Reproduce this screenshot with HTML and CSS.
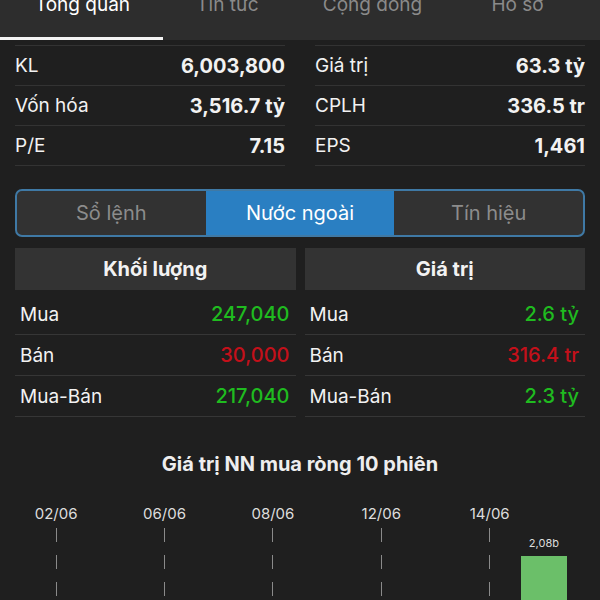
FILE: index.html
```
<!DOCTYPE html>
<html lang="vi">
<head>
  <meta charset="UTF-8" />
  <title>Tổng quan</title>
  <link rel="stylesheet" href="styles.css">
</head>
<body>

  <!-- Tabs -->
  <div class="tabbar">
    <div class="tabs">
      <div class="tab active">Tổng quan</div>
      <div class="tab">Tin tức</div>
      <div class="tab">Cộng đồng</div>
      <div class="tab">Hồ sơ</div>
    </div>
    <div class="underline"></div>
  </div>

  <!-- Stats -->
  <div class="stats">
    <div class="stat-col">
      <div class="stat-row"><span>KL</span><b>6,003,800</b></div>
      <div class="stat-row"><span>Vốn hóa</span><b>3,516.7 tỷ</b></div>
      <div class="stat-row"><span>P/E</span><b>7.15</b></div>
    </div>
    <div class="stat-col">
      <div class="stat-row"><span>Giá trị</span><b>63.3 tỷ</b></div>
      <div class="stat-row"><span>CPLH</span><b>336.5 tr</b></div>
      <div class="stat-row"><span>EPS</span><b>1,461</b></div>
    </div>
  </div>

  <!-- Segment -->
  <div class="segment">
    <div class="seg">Sổ lệnh</div>
    <div class="seg active">Nước ngoài</div>
    <div class="seg">Tín hiệu</div>
  </div>

  <!-- Foreign trading -->
  <div class="tables">
    <div class="table">
      <div class="table-head">Khối lượng</div>
      <div class="table-row"><span>Mua</span><span class="num up">247,040</span></div>
      <div class="table-row"><span>Bán</span><span class="num down">30,000</span></div>
      <div class="table-row"><span>Mua-Bán</span><span class="num up">217,040</span></div>
    </div>
    <div class="table">
      <div class="table-head">Giá trị</div>
      <div class="table-row"><span>Mua</span><span class="num up">2.6 tỷ</span></div>
      <div class="table-row"><span>Bán</span><span class="num down">316.4 tr</span></div>
      <div class="table-row"><span>Mua-Bán</span><span class="num up">2.3 tỷ</span></div>
    </div>
  </div>

  <!-- Chart -->
  <div class="chart-title">Giá trị NN mua ròng 10 phiên</div>
  <div class="chart">
    <div class="slot"><div class="date">02/06</div><div class="dash"></div></div>
    <div class="slot"><div class="date"></div></div>
    <div class="slot"><div class="date">06/06</div><div class="dash"></div></div>
    <div class="slot"><div class="date"></div></div>
    <div class="slot"><div class="date">08/06</div><div class="dash"></div></div>
    <div class="slot"><div class="date"></div></div>
    <div class="slot"><div class="date">12/06</div><div class="dash"></div></div>
    <div class="slot"><div class="date"></div></div>
    <div class="slot"><div class="date">14/06</div><div class="dash"></div></div>
    <div class="slot">
      <div class="date"></div>
      <div class="bar-label">2,08b</div>
      <div class="bar"></div>
    </div>
  </div>

</body>
</html>
```

FILE: styles.css
```
body {
  margin: 0;
  padding: 0;
  font-family: Inter, "Noto Sans", Arial, sans-serif;
  background: #1f1f1f;
  color: #f2f2f2;
  height: 600px;
  overflow: hidden;
}

.tabbar {
  background: #2d2d2d;
  height: 40px;
  display: flex;
  flex-direction: column;
}

.tabs {
  display: flex;
  height: 37px;
  padding-left: 10px;
}

.tab {
  width: 145px;
  text-align: center;
  font-size: 19px;
  line-height: 20px;
  margin-top: -5px;
  color: #8a8a8a;
}

.tab.active {
  color: #ffffff;
}

.underline {
  width: 163px;
  height: 3px;
  background: #f4f4f4;
}

.stats {
  display: flex;
  gap: 30px;
  padding: 0 15px;
  margin-top: 5px;
}

.stat-col {
  flex: 1;
}

.stat-row {
  display: flex;
  justify-content: space-between;
  align-items: center;
  height: 39px;
  border-top: 1px solid #333333;
  font-size: 19px;
}

.stat-row:last-child {
  border-bottom: 1px solid #333333;
}

.stat-row b {
  font-size: 20px;
  font-weight: 700;
}

.segment {
  display: flex;
  margin: 23px 15px 0;
  height: 44px;
  border: 2px solid #3f79a5;
  border-radius: 7px;
  overflow: hidden;
  background: #323232;
}

.seg {
  flex: 1;
  display: flex;
  align-items: center;
  justify-content: center;
  font-size: 20px;
  color: #8c8c8c;
}

.seg.active {
  background: #2a7fc2;
  color: #ffffff;
}

.tables {
  display: flex;
  gap: 9px;
  padding: 0 15px;
  margin-top: 11px;
}

.table {
  flex: 1;
}

.table-head {
  height: 42px;
  background: #333333;
  display: flex;
  align-items: center;
  justify-content: center;
  font-size: 20px;
  font-weight: 700;
  margin-bottom: 4px;
}

.table-row {
  display: flex;
  justify-content: space-between;
  align-items: center;
  height: 40px;
  padding: 0 6px 0 5px;
  border-bottom: 1px solid #363636;
  font-size: 19px;
}

.num {
  font-size: 20px;
  font-weight: 500;
}

.up {
  color: #1fbb1f;
}

.down {
  color: #c4101a;
}

.chart-title {
  margin-top: 35px;
  text-align: center;
  font-size: 20px;
  line-height: 24px;
  font-weight: 700;
  color: #eeeeee;
}

.chart {
  display: grid;
  grid-template-columns: repeat(10, 1fr);
  padding: 0 29px;
  margin-top: 29px;
}

.slot {
  display: flex;
  flex-direction: column;
  align-items: center;
}

.date {
  height: 18px;
  line-height: 18px;
  font-size: 15px;
  color: #dddddd;
  white-space: nowrap;
}

.dash {
  width: 1px;
  height: 100px;
  margin-top: 5px;
  background: repeating-linear-gradient(to bottom, #8a8a8a 0 14px, transparent 14px 27px);
}

.bar-label {
  margin-top: 13px;
  font-size: 11px;
  line-height: 14px;
  color: #dddddd;
}

.bar {
  width: 46px;
  height: 60px;
  margin-top: 6px;
  background: #6bbf69;
}
```
